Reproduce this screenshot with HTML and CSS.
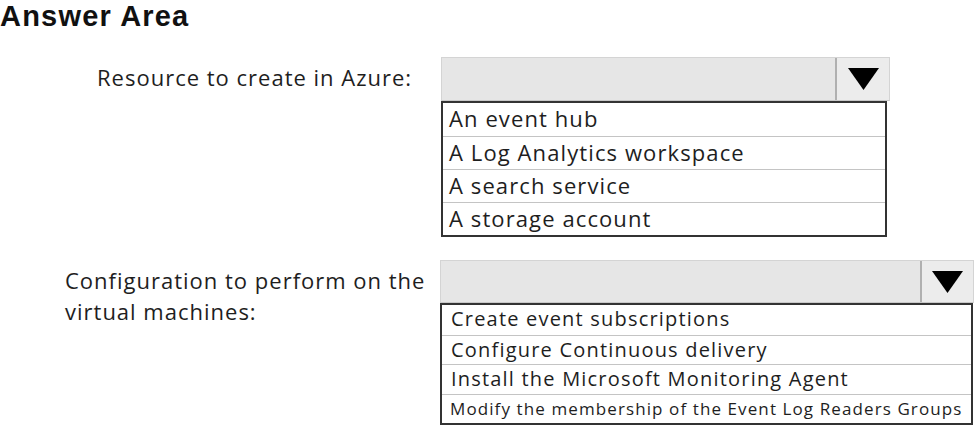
FILE: index.html
```html
<!DOCTYPE html>
<html>
<head>
<meta charset="utf-8">
<link rel="stylesheet" href="styles.css">
</head>
<body>
<div class="page">
  <h1 class="title">Answer Area</h1>
  <div class="row row-1">
    <div class="label label-1">Resource to create in Azure:</div>
    <div class="dropdown dd-1">
      <div class="dd-head">
        <div class="dd-field"></div>
        <div class="dd-btn"><svg width="31" height="22" viewBox="0 0 31 22"><path d="M0 0 H31 L15.5 22 Z" fill="#000"/></svg></div>
      </div>
      <ul class="dd-list">
        <li>An event hub</li>
        <li>A Log Analytics workspace</li>
        <li>A search service</li>
        <li>A storage account</li>
      </ul>
    </div>
  </div>
  <div class="row row-2">
    <div class="label label-2">Configuration to perform on the<br>virtual machines:</div>
    <div class="dropdown dd-2">
      <div class="dd-head">
        <div class="dd-field"></div>
        <div class="dd-btn"><svg width="31" height="22" viewBox="0 0 31 22"><path d="M0 0 H31 L15.5 22 Z" fill="#000"/></svg></div>
      </div>
      <ul class="dd-list">
        <li>Create event subscriptions</li>
        <li>Configure Continuous delivery</li>
        <li>Install the Microsoft Monitoring Agent</li>
        <li class="small">Modify the membership of the Event Log Readers Groups</li>
      </ul>
    </div>
  </div>
</div>
</body>
</html>
```

FILE: styles.css
```css
* { box-sizing: border-box; }
html, body { margin: 0; padding: 0; background: #fff; }
body { width: 974px; height: 425px; overflow: hidden; font-family: "Open Sans", Lato, sans-serif; color: #1e1e1e; }
.page { width: 974px; height: 425px; }
.title {
  margin: 0;
  height: 57px;
  font-family: "Liberation Sans", Arial, sans-serif;
  font-weight: bold;
  font-size: 29px;
  letter-spacing: 1.2px;
  line-height: 33px;
  color: #111;
}
.row { display: flex; }
.row-2 { margin-top: 23px; }
.label { font-size: 22px; line-height: 31px; letter-spacing: 1px; }
.label-1 { width: 441px; padding-left: 97px; padding-top: 5px; }
.label-2 { width: 440px; padding-left: 65px; padding-top: 5px; }
.dropdown { display: flex; flex-direction: column; }
.dd-1 { width: 449px; }
.dd-2 { width: 534px; }
.dd-head { display: flex; background: #e6e6e6; border: 1px solid #d4d4d4; border-bottom-color: #c8c8c8; }
.dd-1 .dd-head { height: 44px; }
.dd-2 .dd-head { height: 43px; }
.dd-field { flex: 1; border-right: 2px solid #b0b0b0; }
.dd-btn { width: 52px; display: flex; align-items: center; justify-content: center; background: #ececec; }
.dd-2 .dd-btn { width: 51px; }
.dd-list { list-style: none; margin: 0; padding: 0; border: 2px solid #333; }
.dd-1 .dd-list { width: 446px; }
.dd-2 .dd-list { width: 533px; }
.dd-list li { border-top: 1px solid #c4c4c4; padding-left: 6px; white-space: nowrap; }
.dd-list li:first-child { border-top: none; }
.dd-1 .dd-list li { height: 33px; line-height: 30px; font-size: 22px; letter-spacing: 1.1px; }
.dd-2 .dd-list li { height: 29.5px; line-height: 28px; font-size: 20px; letter-spacing: 1.2px; padding-left: 9px; }
.dd-2 .dd-list li.small { font-size: 17px; letter-spacing: 1.1px; padding-left: 8px; }
```
